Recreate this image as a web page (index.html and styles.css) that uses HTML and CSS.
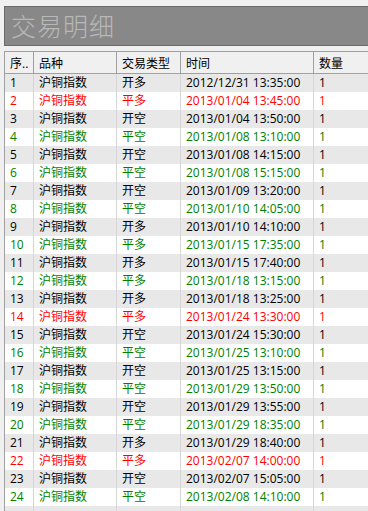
FILE: index.html
```html
<!DOCTYPE html>
<html lang="zh">
<head>
<meta charset="utf-8">
<title>交易明细</title>
<link rel="stylesheet" href="styles.css">
</head>
<body>
<div class="title">交易明细</div>
<table class="grid">
<colgroup><col class="c1"><col class="c2"><col class="c3"><col class="c4"><col class="c5"></colgroup>
<thead>
<tr><th>序..</th><th>品种</th><th>交易类型</th><th>时间</th><th>数量</th></tr>
</thead>
<tbody>
<tr class="k"><td>1</td><td>沪铜指数</td><td>开多</td><td>2012/12/31 13:35:00</td><td>1</td></tr>
<tr class="r"><td>2</td><td>沪铜指数</td><td>平多</td><td>2013/01/04 13:45:00</td><td>1</td></tr>
<tr class="k"><td>3</td><td>沪铜指数</td><td>开空</td><td>2013/01/04 13:50:00</td><td>1</td></tr>
<tr class="g"><td>4</td><td>沪铜指数</td><td>平空</td><td>2013/01/08 13:10:00</td><td>1</td></tr>
<tr class="k"><td>5</td><td>沪铜指数</td><td>开空</td><td>2013/01/08 14:15:00</td><td>1</td></tr>
<tr class="g"><td>6</td><td>沪铜指数</td><td>平空</td><td>2013/01/08 15:15:00</td><td>1</td></tr>
<tr class="k"><td>7</td><td>沪铜指数</td><td>开空</td><td>2013/01/09 13:20:00</td><td>1</td></tr>
<tr class="g"><td>8</td><td>沪铜指数</td><td>平空</td><td>2013/01/10 14:05:00</td><td>1</td></tr>
<tr class="k"><td>9</td><td>沪铜指数</td><td>开多</td><td>2013/01/10 14:10:00</td><td>1</td></tr>
<tr class="g"><td>10</td><td>沪铜指数</td><td>平多</td><td>2013/01/15 17:35:00</td><td>1</td></tr>
<tr class="k"><td>11</td><td>沪铜指数</td><td>开多</td><td>2013/01/15 17:40:00</td><td>1</td></tr>
<tr class="g"><td>12</td><td>沪铜指数</td><td>平多</td><td>2013/01/18 13:15:00</td><td>1</td></tr>
<tr class="k"><td>13</td><td>沪铜指数</td><td>开多</td><td>2013/01/18 13:25:00</td><td>1</td></tr>
<tr class="r"><td>14</td><td>沪铜指数</td><td>平多</td><td>2013/01/24 13:30:00</td><td>1</td></tr>
<tr class="k"><td>15</td><td>沪铜指数</td><td>开空</td><td>2013/01/24 15:30:00</td><td>1</td></tr>
<tr class="g"><td>16</td><td>沪铜指数</td><td>平空</td><td>2013/01/25 13:10:00</td><td>1</td></tr>
<tr class="k"><td>17</td><td>沪铜指数</td><td>开空</td><td>2013/01/25 13:15:00</td><td>1</td></tr>
<tr class="g"><td>18</td><td>沪铜指数</td><td>平空</td><td>2013/01/29 13:50:00</td><td>1</td></tr>
<tr class="k"><td>19</td><td>沪铜指数</td><td>开空</td><td>2013/01/29 13:55:00</td><td>1</td></tr>
<tr class="g"><td>20</td><td>沪铜指数</td><td>平空</td><td>2013/01/29 18:35:00</td><td>1</td></tr>
<tr class="k"><td>21</td><td>沪铜指数</td><td>开多</td><td>2013/01/29 18:40:00</td><td>1</td></tr>
<tr class="r"><td>22</td><td>沪铜指数</td><td>平多</td><td>2013/02/07 14:00:00</td><td>1</td></tr>
<tr class="k"><td>23</td><td>沪铜指数</td><td>开空</td><td>2013/02/07 15:05:00</td><td>1</td></tr>
<tr class="g"><td>24</td><td>沪铜指数</td><td>平空</td><td>2013/02/08 14:10:00</td><td>1</td></tr>
<tr class="k"><td></td><td></td><td></td><td></td><td></td></tr>
</tbody>
</table>
</body>
</html>
```
FILE: styles.css
```css
html, body {
  margin: 0;
  padding: 0;
  background: #f0f0f0;
  overflow: hidden;
}
body {
  font-family: "Open Sans", "Noto Sans CJK SC", sans-serif;
  font-size: 12px;
  color: #000;
}
.title {
  margin: 6px 0 0 4px;
  box-sizing: border-box;
  height: 40px;
  background: #888888;
  border: 1px solid #6a6a6a;
  border-right: none;
  color: #b8b8b8;
  font-family: "Noto Sans CJK SC", sans-serif;
  font-weight: 300;
  font-size: 25px;
  line-height: 36px;
  padding-left: 6px;
  letter-spacing: 1px;
}
.grid {
  margin: 5px 0 0 4px;
  width: 364px;
  table-layout: fixed;
  border-collapse: collapse;
  border: 1px solid #a0a0a0;
  border-right: none;
}
.c1 { width: 29px; }
.c2 { width: 83px; }
.c3 { width: 64px; }
.c4 { width: 133px; }
.c5 { width: 55px; }
.grid th {
  height: 21px;
  padding: 0 0 0 5px;
  text-align: left;
  font-weight: normal;
  background: #f0f0f0;
  border-right: 1px solid #a0a0a0;
  border-bottom: 1px solid #a0a0a0;
  white-space: nowrap;
  overflow: hidden;
}
.grid td {
  height: 18px;
  padding: 0 0 0 5px;
  line-height: 18px;
  border-right: 1px solid #d6d6d6;
  white-space: nowrap;
  overflow: hidden;
}
.grid tbody tr:nth-child(odd) td { background: #e8e8e8; }
.grid tbody tr:nth-child(even) td { background: #ffffff; }
.r td { color: #ff0000; }
.g td { color: #008000; }
.k td { color: #000; }
```
